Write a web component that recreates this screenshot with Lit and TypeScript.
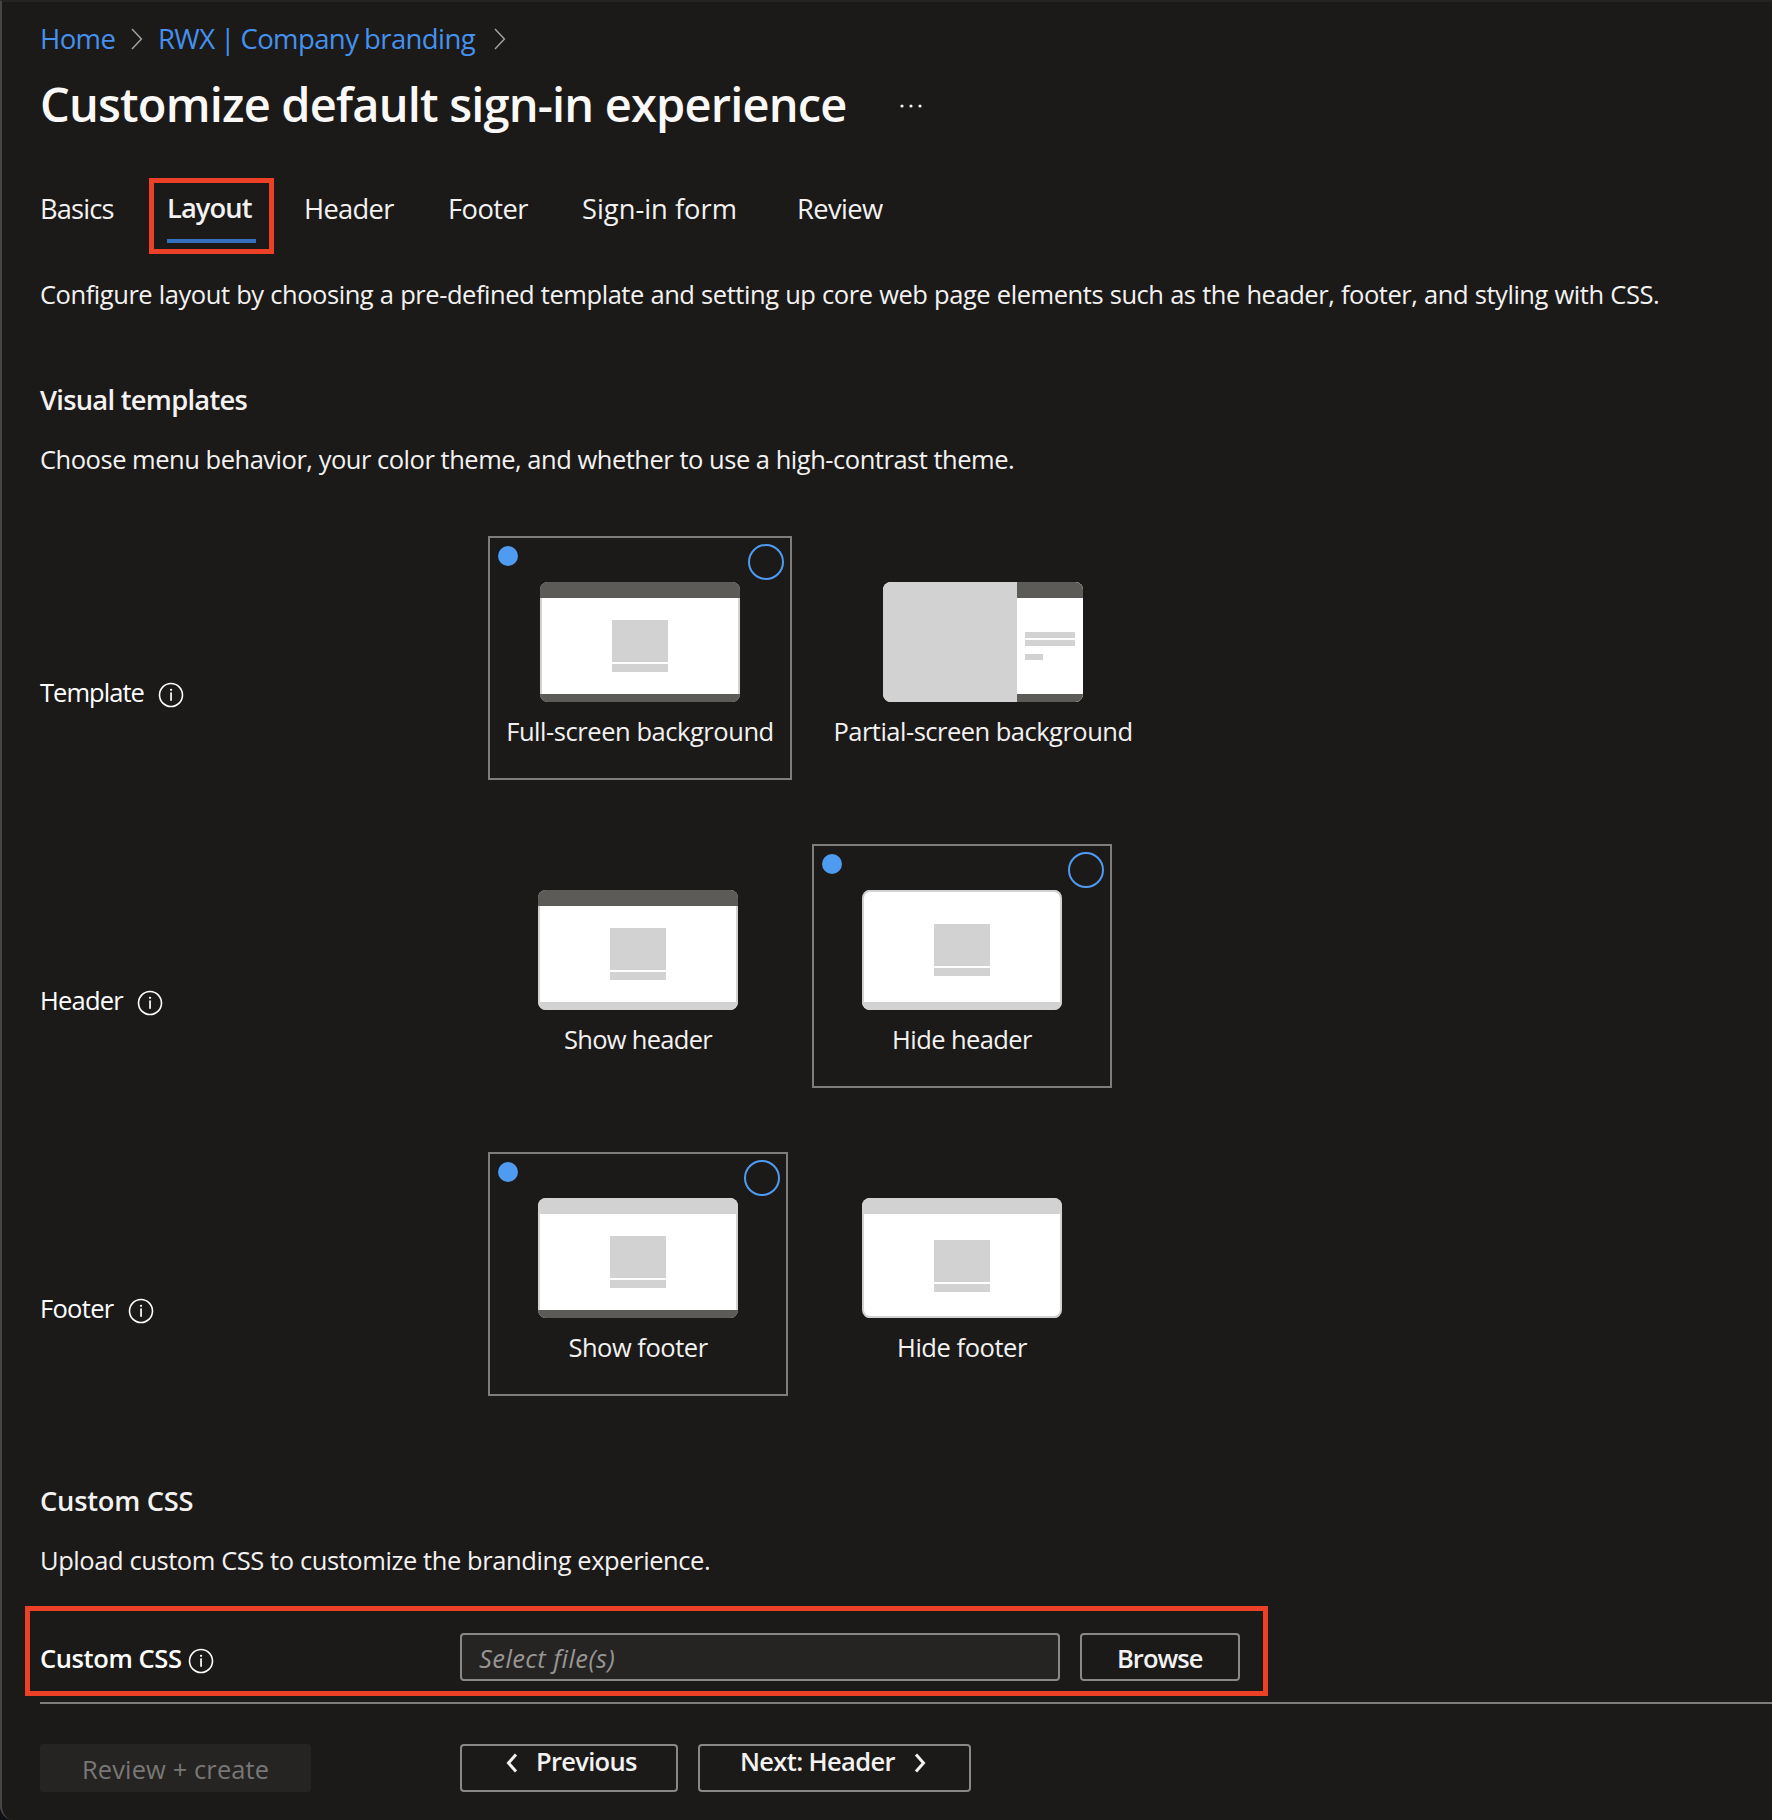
import { LitElement, html, svg, css, nothing } from "lit";
import { customElement, property } from "lit/decorators.js";
import { classMap } from "lit/directives/class-map.js";

type Bar = "none" | "light" | "dark";

interface Option {
  label: string;
  key: string;
  layout: "full" | "partial";
  top: Bar;
  bottom: Bar;
  selected: boolean;
}

interface Setting {
  label: string;
  key: string;
  options: Option[];
}

const SETTINGS: Setting[] = [
  {
    label: "Template",
    key: "template",
    options: [
      { label: "Full-screen background", key: "full-screen", layout: "full", top: "dark", bottom: "dark", selected: true },
      { label: "Partial-screen background", key: "partial-screen", layout: "partial", top: "dark", bottom: "dark", selected: false },
    ],
  },
  {
    label: "Header",
    key: "header",
    options: [
      { label: "Show header", key: "show-header", layout: "full", top: "dark", bottom: "light", selected: false },
      { label: "Hide header", key: "hide-header", layout: "full", top: "none", bottom: "light", selected: true },
    ],
  },
  {
    label: "Footer",
    key: "footer",
    options: [
      { label: "Show footer", key: "show-footer", layout: "full", top: "light", bottom: "dark", selected: true },
      { label: "Hide footer", key: "hide-footer", layout: "full", top: "light", bottom: "none", selected: false },
    ],
  },
];

const TABS = [
  { label: "Basics", key: "basics" },
  { label: "Layout", key: "layout" },
  { label: "Header", key: "header" },
  { label: "Footer", key: "footer" },
  { label: "Sign-in form", key: "form" },
  { label: "Review", key: "review" },
];

const infoIcon = html`<svg class="info" width="26" height="26" viewBox="0 0 26 26">
  ${svg`<circle cx="13" cy="13" r="11.5" fill="none" stroke="#fff" stroke-width="1.6"/>
  <rect x="12.2" y="10.4" width="1.7" height="8.4" fill="#fff"/>
  <circle cx="13.05" cy="7.8" r="1.15" fill="#fff"/>`}
</svg>`;

const crumbIcon = html`<svg class="crumb-icon" width="12" height="22" viewBox="0 0 12 22">
  <path d="M1 1 10.4 11 1 21" fill="none" stroke="#a19f9d" stroke-width="1.5" />
</svg>`;

@customElement("layout-thumb")
class LayoutThumb extends LitElement {
  @property() layout = "full";
  @property() top: Bar = "none";
  @property() bottom: Bar = "none";

  static styles = css`
    :host {
      display: block;
      width: 200px;
      height: 120px;
    }
    .thumb {
      box-sizing: border-box;
      height: 120px;
      border-radius: 8px;
      overflow: hidden;
      background: #fff;
      display: flex;
    }
    .pane {
      flex: 1;
      display: flex;
      flex-direction: column;
      background: #d2d2d2;
    }
    .bar-top {
      height: 16px;
    }
    .bar-bottom {
      height: 8px;
    }
    .light {
      background: #d2d2d2;
    }
    .dark {
      background: #5d5b57;
    }
    .none {
      background: #d2d2d2;
      height: 2px;
    }
    .body {
      flex: 1;
      margin: 0 2px;
      background: #fff;
      display: flex;
      flex-direction: column;
      align-items: center;
      justify-content: center;
      gap: 2px;
    }
    .bar-top.none + .body {
      border-radius: 6px 6px 0 0;
      padding-top: 6px;
    }
    .body.open-bottom {
      border-radius: 0 0 6px 6px;
      padding-top: 2px;
    }
    .picture {
      width: 56px;
      height: 42px;
      background: #d2d2d2;
    }
    .caption {
      width: 56px;
      height: 8px;
      background: #d2d2d2;
    }
    .backdrop {
      width: 134px;
      background: #d2d2d2;
    }
    .side {
      margin: 0;
      align-items: flex-start;
      padding-left: 8px;
    }
    .line {
      width: 50px;
      height: 6px;
      background: #d2d2d2;
    }
    .short {
      width: 18px;
      margin-top: 6px;
    }
  `;

  render() {
    const partial = this.layout === "partial";
    return html`<div class="thumb">
      ${partial ? html`<div class="backdrop"></div>` : nothing}
      <div class="pane">
        <div class="bar-top ${this.top}"></div>
        <div class=${classMap({ body: true, side: partial, "open-bottom": this.bottom === "none" })}>
          ${partial
            ? html`<div class="line"></div><div class="line"></div><div class="line short"></div>`
            : html`<div class="picture"></div><div class="caption"></div>`}
        </div>
        <div class="bar-bottom ${this.bottom}"></div>
      </div>
    </div>`;
  }
}

@customElement("app-root")
class AppRoot extends LitElement {
  static styles = css`
    :host {
      display: block;
      font-family: "Open Sans", "Noto Sans", sans-serif;
      color: #f3f2f1;
    }
    * {
      box-sizing: border-box;
    }
    .page {
      height: 1820px;
      overflow: hidden;
      background: #1b1a19;
      border-top: 2px solid #252423;
      border-left: 2px solid #484644;
      border-bottom-left-radius: 14px;
      padding-left: 38px;
    }
    .outer {
      background: #0e1116;
    }
    svg {
      display: block;
      flex: none;
    }
    .crumbs {
      display: flex;
      align-items: center;
      height: 36px;
      margin-top: 19px;
      font-size: 27.5px;
      line-height: 36px;
      color: #4591ee;
      white-space: nowrap;
    }
    .crumb-home {
      width: 91px;
      letter-spacing: -0.6px;
    }
    .crumb-brand {
      width: 336px;
      margin-left: 15px;
      letter-spacing: -0.6px;
      word-spacing: -0.8px;
    }
    .title-row {
      display: flex;
      align-items: center;
      height: 60px;
      margin: 17px 0 0;
    }
    h1 {
      margin: 0;
      width: 860px;
      font-size: 47px;
      line-height: 60px;
      font-weight: 600;
      letter-spacing: -0.82px;
      white-space: nowrap;
      color: #faf9f8;
    }
    .more {
      margin-top: 4px;
    }
    .tabs {
      display: grid;
      grid-template-columns: 109px 155px 144px 134px 215px 200px;
      height: 76px;
      margin-top: 44px;
      font-size: 27.3px;
      line-height: 36px;
      white-space: nowrap;
    }
    .tab {
      padding-top: 13px;
    }
    .tab-basics {
      letter-spacing: -0.85px;
    }
    .tab-layout {
      width: 125px;
      height: 76px;
      border: 5px solid #ec4027;
      padding: 7px 13px 0;
      font-weight: 600;
      letter-spacing: -0.9px;
    }
    .tab-layout::after {
      content: "";
      display: block;
      width: 89px;
      height: 4px;
      margin-top: 13px;
      background: #366fbe;
    }
    .tab-header {
      letter-spacing: -0.7px;
    }
    .tab-footer {
      letter-spacing: -0.55px;
    }
    .tab-form {
      letter-spacing: 0;
    }
    .tab-review {
      letter-spacing: -0.6px;
    }
    p {
      margin: 0;
      font-size: 25.5px;
      line-height: 36px;
      white-space: nowrap;
    }
    h2 {
      margin: 0;
      font-size: 27.3px;
      line-height: 36px;
      font-weight: 600;
      white-space: nowrap;
    }
    .intro {
      margin-top: 22px;
      letter-spacing: -0.45px;
      word-spacing: 0.42px;
    }
    .h-visual {
      margin: 70px 0 0 0;
      letter-spacing: -0.72px;
    }
    .p-visual {
      margin-top: 23px;
      letter-spacing: -0.48px;
    }
    .settings {
      display: flex;
      flex-direction: column;
      gap: 64px;
      margin-top: 59px;
    }
    .setting {
      display: flex;
      height: 244px;
    }
    .setting-label {
      display: flex;
      width: 448px;
      height: 36px;
      margin-top: 138px;
      gap: 13px;
      font-size: 25.5px;
      line-height: 36px;
      color: #fff;
    }
    .setting-label .info {
      margin-top: 8px;
    }
    .lab-template {
      width: 105px;
      letter-spacing: -0.95px;
    }
    .lab-header {
      width: 84px;
      letter-spacing: -0.8px;
    }
    .lab-footer {
      width: 75px;
      letter-spacing: -0.7px;
    }
    .cards {
      display: flex;
      gap: 24px;
    }
    .card {
      position: relative;
      width: 300px;
      height: 244px;
      padding-top: 44px;
      border: 2px solid transparent;
      display: flex;
      flex-direction: column;
      align-items: center;
      font-size: 25.5px;
      line-height: 36px;
      white-space: nowrap;
    }
    .card.selected {
      border-color: #7f7d7b;
    }
    .full-screen {
      width: 304px;
      letter-spacing: -0.45px;
    }
    .partial-screen {
      width: 334px;
      letter-spacing: -0.51px;
    }
    .show-header {
      letter-spacing: -0.7px;
    }
    .hide-header {
      letter-spacing: -0.58px;
    }
    .show-footer {
      letter-spacing: -0.48px;
    }
    .hide-footer {
      letter-spacing: -0.45px;
    }
    .card-label {
      margin-top: 11px;
    }
    .dot {
      position: absolute;
      left: 8px;
      top: 8px;
      width: 20px;
      height: 20px;
      border-radius: 50%;
      background: #4f9bf2;
    }
    .ring {
      position: absolute;
      right: 6px;
      top: 6px;
      width: 36px;
      height: 36px;
      border-radius: 50%;
      border: 2px solid #4f9bf2;
    }
    .h-css {
      margin: 87px 0 0 0;
      letter-spacing: -0.25px;
    }
    .p-css {
      margin-top: 23px;
      letter-spacing: -0.42px;
    }
    .upload {
      display: flex;
      width: 1243px;
      height: 90px;
      margin: 28px 0 0 -15px;
      padding: 22px 0 0 10px;
      border: 5px solid #ec4027;
      font-size: 25.5px;
      line-height: 36px;
      white-space: nowrap;
    }
    .upload-label {
      display: flex;
      width: 420px;
      height: 36px;
      margin-top: 8px;
      font-weight: 600;
      color: #fff;
    }
    .upload-name {
      width: 148px;
      margin-top: -1px;
      letter-spacing: -0.4px;
    }
    .upload-label .info {
      margin-top: 7px;
    }
    .field {
      width: 600px;
      height: 48px;
      padding: 5px 0 0 17px;
      border: 2px solid #8a8886;
      border-radius: 4px;
      background: #252423;
      font-style: italic;
      letter-spacing: 0.42px;
      color: #979593;
    }
    .btn {
      height: 48px;
      border: 2px solid #8a8886;
      border-radius: 4px;
      font-size: 25.5px;
      line-height: 36px;
      font-weight: 600;
      white-space: nowrap;
      display: flex;
    }
    .browse {
      width: 160px;
      margin-left: 20px;
      padding: 5px 0 0 35px;
      letter-spacing: -0.95px;
    }
    .rule {
      height: 2px;
      margin: 6px 0 0;
      background: #7f7d7b;
    }
    .actions {
      display: flex;
      margin: 40px 0 0;
    }
    .create {
      width: 271px;
      padding: 5px 0 0 40px;
      border-color: #252423;
      background: #252423;
      color: #797775;
      font-weight: 400;
      letter-spacing: 0.1px;
    }
    .prev {
      width: 218px;
      margin-left: 149px;
      padding: 0 0 0 44px;
      letter-spacing: -0.7px;
    }
    .prev svg {
      margin: 7px 18px 0 0;
    }
    .next {
      width: 273px;
      margin-left: 20px;
      padding: 0 0 0 40px;
      letter-spacing: -0.65px;
    }
    .next svg {
      margin: 7px 0 0 19px;
    }
    .btn-text {
      margin-top: -3px;
    }
  `;

  private option(o: Option) {
    return html`<div class=${classMap({ card: true, selected: o.selected, [o.key]: true })}>
      ${o.selected ? html`<span class="dot"></span><span class="ring"></span>` : nothing}
      <layout-thumb .layout=${o.layout} .top=${o.top} .bottom=${o.bottom}></layout-thumb>
      <div class="card-label">${o.label}</div>
    </div>`;
  }

  render() {
    return html`<div class="outer"><div class="page">
      <nav class="crumbs">
        <span class="crumb-home">Home</span>${crumbIcon}
        <span class="crumb-brand">RWX | Company branding</span>${crumbIcon}
      </nav>
      <div class="title-row">
        <h1>Customize default sign-in experience</h1>
        <svg class="more" width="24" height="6" viewBox="0 0 24 6" fill="#f3f2f1">
          <circle cx="2" cy="3" r="1.6" /><circle cx="11" cy="3" r="1.6" /><circle cx="20" cy="3" r="1.6" />
        </svg>
      </div>
      <div class="tabs">${TABS.map((t) => html`<div class="tab tab-${t.key}">${t.label}</div>`)}</div>
      <p class="intro">Configure layout by choosing a pre-defined template and setting up core web page elements such as the header, footer, and styling with CSS.</p>
      <h2 class="h-visual">Visual templates</h2>
      <p class="p-visual">Choose menu behavior, your color theme, and whether to use a high-contrast theme.</p>
      <div class="settings">
        ${SETTINGS.map(
          (s) => html`<div class="setting">
            <div class="setting-label"><span class="lab-${s.key}">${s.label}</span>${infoIcon}</div>
            <div class="cards">${s.options.map((o) => this.option(o))}</div>
          </div>`
        )}
      </div>
      <h2 class="h-css">Custom CSS</h2>
      <p class="p-css">Upload custom CSS to customize the branding experience.</p>
      <div class="upload">
        <div class="upload-label"><span class="upload-name">Custom CSS</span>${infoIcon}</div>
        <div class="field">Select file(s)</div>
        <div class="btn browse">Browse</div>
      </div>
      <div class="rule"></div>
      <div class="actions">
        <div class="btn create">Review + create</div>
        <div class="btn prev">
          <svg width="12" height="20" viewBox="0 0 12 20"><path d="M10 1.5 2.5 10 10 18.5" fill="none" stroke="#f3f2f1" stroke-width="3" /></svg>
          <span class="btn-text">Previous</span>
        </div>
        <div class="btn next">
          <span class="btn-text">Next: Header</span>
          <svg width="12" height="20" viewBox="0 0 12 20"><path d="M2 1.5 9.5 10 2 18.5" fill="none" stroke="#f3f2f1" stroke-width="3" /></svg>
        </div>
      </div>
    </div></div>`;
  }
}
